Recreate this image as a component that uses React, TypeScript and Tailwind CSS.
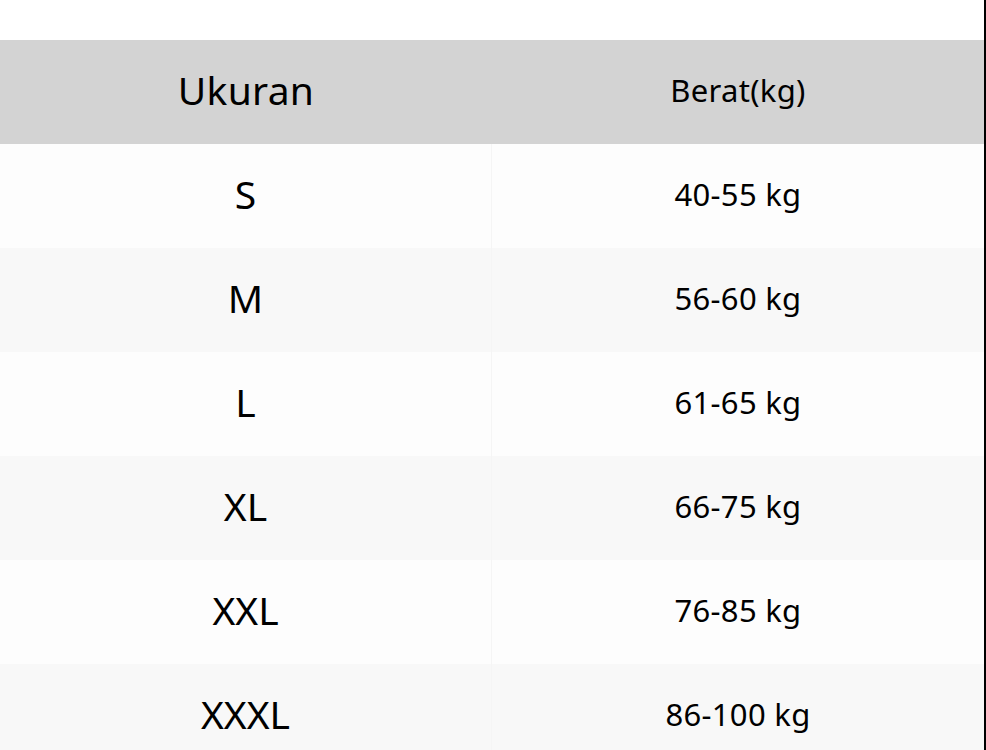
const rows = [
  { size: 'S', weight: '40-55 kg' },
  { size: 'M', weight: '56-60 kg' },
  { size: 'L', weight: '61-65 kg' },
  { size: 'XL', weight: '66-75 kg' },
  { size: 'XXL', weight: '76-85 kg' },
  { size: 'XXXL', weight: '86-100 kg' },
];

export default function App() {
  return (
    <div
      className="h-[750px] w-[986px] overflow-hidden bg-white text-black"
      style={{ fontFamily: '"Noto Sans", "Open Sans", sans-serif' }}
    >
      <div className="w-[984px] border-r-2 border-black box-content h-full pt-10">
        <div className="grid grid-cols-2 h-[104px] bg-[#d3d3d3] items-center pb-1">
          <div className="text-center text-[39px] tracking-[0.3px]">Ukuran</div>
          <div className="text-center text-[31px] tracking-[0.3px]">Berat(kg)</div>
        </div>
        {rows.map((r, i) => (
          <div
            key={r.size}
            className={`grid grid-cols-2 h-[104px] ${i % 2 === 0 ? 'bg-[#fdfdfd]' : 'bg-[#f8f8f8]'}`}
          >
            <div className="text-[39px] border-r border-[#f5f5f5] h-full flex items-center justify-center pb-1">
              {r.size}
            </div>
            <div className="text-[31px] h-full flex items-center justify-center pb-1 tracking-[0.3px]">
              {r.weight}
            </div>
          </div>
        ))}
      </div>
    </div>
  );
}
